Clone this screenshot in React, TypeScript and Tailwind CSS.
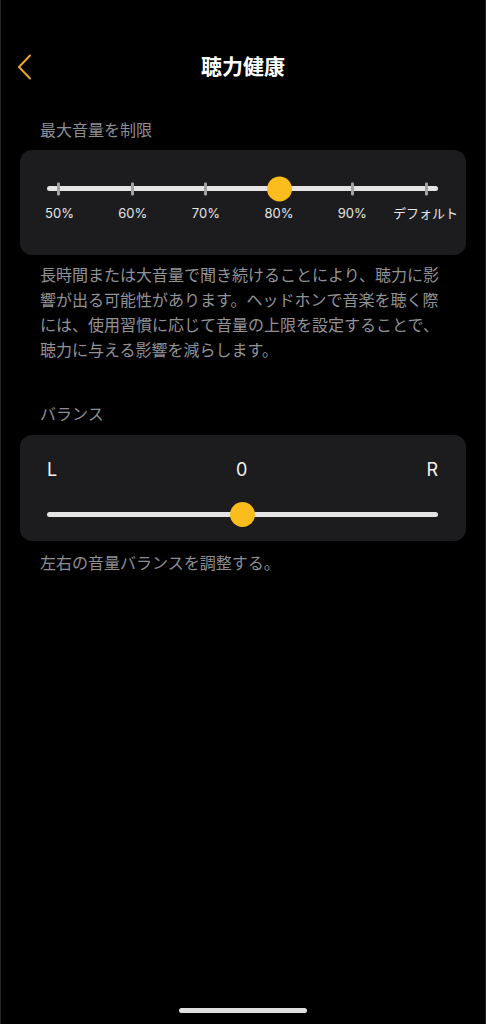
const FONT = "font-['Inter','Noto_Sans_CJK_JP',sans-serif]"

const LIMIT_STEPS = ['50%', '60%', '70%', '80%', '90%', 'デフォルト']
const LIMIT_INDEX = 3

function Thumb() {
  return <div className="h-[25px] w-[25px] shrink-0 rounded-full bg-[#fbbd1e]" />
}

function LimitSlider() {
  return (
    <div className="rounded-[12px] bg-[#1c1c1e] pl-[27px] pr-[28px] pt-[36px] pb-[34px]">
      <div className="relative h-[5px] rounded-full bg-[#e4e4e4]">
        <div className="absolute inset-x-[10px] top-1/2 flex -translate-y-1/2 items-center justify-between">
          {LIMIT_STEPS.map((step, i) => (
            <div key={step} className="flex w-[3px] items-center justify-center">
              {i === LIMIT_INDEX
                ? <Thumb />
                : <div className="h-[13px] w-[3px] shrink-0 rounded-[1px] bg-[#a3a3a3]" />}
            </div>
          ))}
        </div>
      </div>
      <div className="mt-[14px] flex justify-between px-[11px]">
        {LIMIT_STEPS.map(step => (
          <div key={step} className="flex w-[3px] justify-center">
            <span className="whitespace-nowrap text-[13px] leading-[16px] text-[#e6e6e6]">{step}</span>
          </div>
        ))}
      </div>
    </div>
  )
}

function BalanceSlider() {
  return (
    <div className="rounded-[12px] bg-[#1c1c1e] pl-[27px] pr-[28px] pt-[24px] pb-[24px]">
      <div className="flex justify-between text-[18px] leading-[22px] text-[#f2f2f2]">
        <span>L</span>
        <span>0</span>
        <span>R</span>
      </div>
      <div className="relative mt-[31px] h-[5px] rounded-full bg-[#e4e4e4]">
        <div className="absolute inset-0 flex items-center justify-center">
          <Thumb />
        </div>
      </div>
    </div>
  )
}

export default function App() {
  return (
    <div className={`${FONT} flex h-[1024px] w-full flex-col overflow-hidden bg-black shadow-[inset_1px_0_0_#262626,inset_-1px_0_0_#262626]`}>
      <header className="relative mt-[45px] flex h-[44px] items-center justify-center">
        <button type="button" className="absolute left-[16px] top-1/2 -translate-y-1/2 p-[1px]">
          <svg width="15" height="26" viewBox="0 0 15 26" fill="none">
            <path d="M13 1.5 2 13l11 11.5" stroke="#e8a820" strokeWidth="2" strokeLinecap="round" strokeLinejoin="round" />
          </svg>
        </button>
        <h1 className="text-[21px] font-bold leading-[28px] text-white">聴力健康</h1>
      </header>

      <main className="px-[20px]">
        <p className="mt-[30px] px-[20px] text-[16px] leading-[22px] text-[#8e8e93]">最大音量を制限</p>
        <div className="mt-[9px]">
          <LimitSlider />
        </div>
        <p className="mt-[8px] px-[20px] text-[16px] leading-[25px] text-[#929297]">
          長時間または大音量で聞き続けることにより、聴力に影響が出る可能性があります。ヘッドホンで音楽を聴く際には、使用習慣に応じて音量の上限を設定することで、聴力に与える影響を減らします。
        </p>

        <p className="mt-[40px] px-[20px] text-[16px] leading-[22px] text-[#8e8e93]">バランス</p>
        <div className="mt-[10px]">
          <BalanceSlider />
        </div>
        <p className="mt-[11px] px-[20px] text-[16px] leading-[22px] text-[#8e8e93]">左右の音量バランスを調整する。</p>
      </main>

      <div className="mt-auto flex justify-center pb-[11px]">
        <div className="h-[5px] w-[128px] rounded-full bg-[#e0e0e0]" />
      </div>
    </div>
  )
}
